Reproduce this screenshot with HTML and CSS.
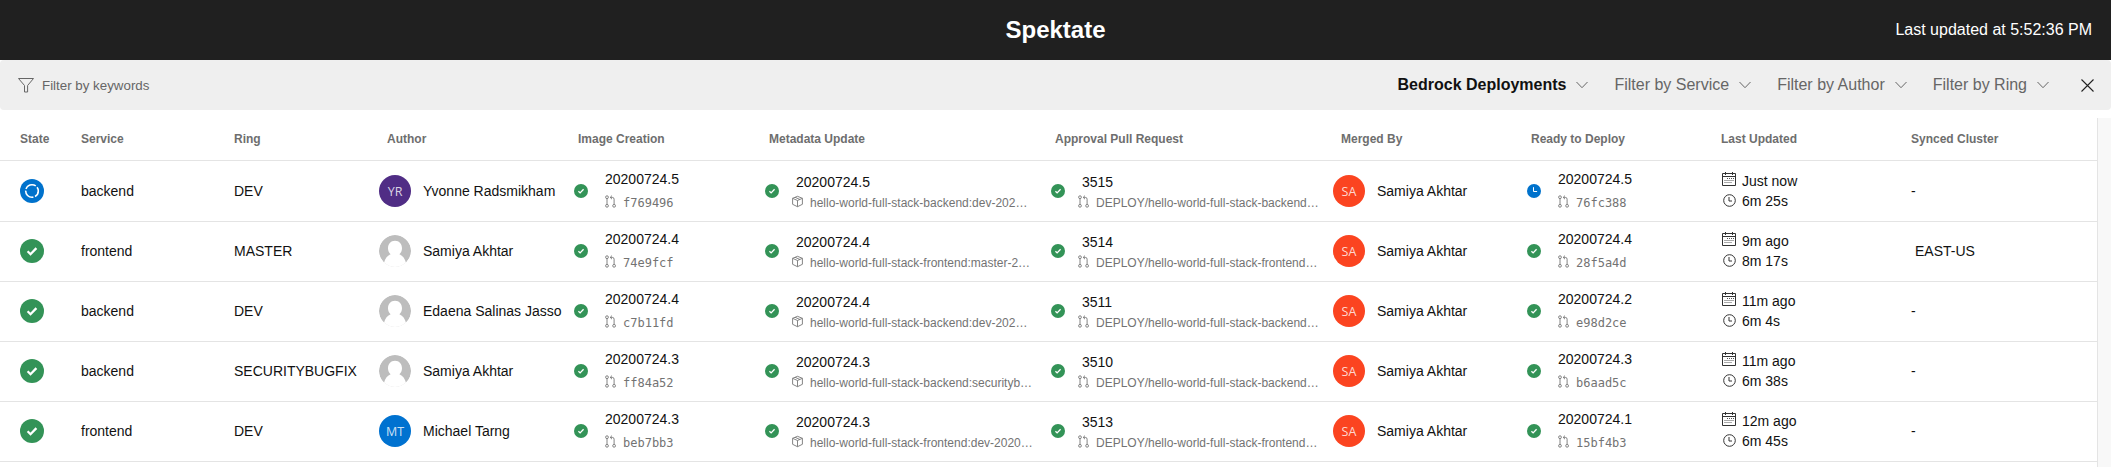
FILE: index.html
```
<!DOCTYPE html>
<html lang="en">
<head>
<meta charset="utf-8">
<title>Spektate</title>
<link rel="stylesheet" href="styles.css">
</head>
<body>
<svg width="0" height="0" class="defs" aria-hidden="true">
  <symbol id="ok" viewBox="0 0 24 24"><circle cx="12" cy="12" r="12" fill="#339357"/><path d="M7.6 12.3l2.900 2.900 5.900-6.100" fill="none" stroke="#fff" stroke-width="2.300"/></symbol>
  <symbol id="run" viewBox="0 0 24 24"><circle cx="12" cy="12" r="12" fill="#0072cc"/><circle cx="12" cy="12" r="6.300" fill="none" stroke="#fff" stroke-width="1.600" stroke-dasharray="11.500 1.700" stroke-dashoffset="5"/></symbol>
  <symbol id="wait" viewBox="0 0 14 14"><circle cx="7" cy="7" r="7" fill="#0072cc"/><path d="M6.500 3.200v4.300h3.600" fill="none" stroke="#fff"/></symbol>
  <symbol id="pr" viewBox="0.5 0 11 13"><g fill="none" stroke="#777" stroke-width=".9"><circle cx="2.500" cy="2.200" r="1.400"/><circle cx="2.500" cy="10.800" r="1.400"/><circle cx="9.600" cy="10.800" r="1.400"/><path d="M2.500 3.600v5.800M9.600 9.400V4.200q0-1.800-1.800-1.800H5.800M7.500.6L5.700 2.400l1.800 1.800"/></g></symbol>
  <symbol id="box" viewBox="0.5 0 11 12"><path d="M6 .8l4.900 2v6L6 11.2 1.100 8.800v-6zM1.100 2.800L6 5l4.900-2.200M6 5v6.200M3.500 1.800l5 2.200" fill="none" stroke="#777" stroke-width=".9"/></symbol>
  <symbol id="cal" viewBox="0 0 14 14"><path d="M.5 1.500h13v12H.5zM.5 4.500h13M3.500 0v3M10.500 0v3" fill="none" stroke="#333"/><path d="M5 6.500h7M2.500 8.500H12M2.500 10.500h7" fill="none" stroke="#555" stroke-dasharray="1 1"/></symbol>
  <symbol id="clock" viewBox="0 0 13 13"><circle cx="6.500" cy="6.500" r="5.800" fill="none" stroke="#333"/><path d="M6 3v4h3" fill="none" stroke="#333"/></symbol>
  <symbol id="person" viewBox="0 0 32 32"><circle cx="16" cy="16" r="16" fill="#bdbdbd"/><path d="M16 5.700c-4.300 0-7 3.300-7 7.600 0 2.500 1 4.700 2.600 6-3.600 1.500-5.500 4.500-6.600 8.400V32h22v-4.300c-1.100-3.900-3-6.900-6.600-8.400 1.600-1.300 2.600-3.500 2.600-6 0-4.300-2.700-7.600-7-7.600z" fill="#fff"/></symbol>
  <symbol id="chev" viewBox="0 0 12 8"><path d="M.5 1l5.500 5.700L11.500 1" fill="none" stroke="#666"/></symbol>
</svg>
<header class="topbar"><h1 class="title">Spektate</h1><span class="updated">Last updated at 5:52:36 PM</span></header>
<div class="filters">
  <svg class="funnel" viewBox="0 0 16 15"><path d="M.5.500h15l-5.900 7v6.500H6.500V7.500z" fill="none" stroke="#666"/></svg>
  <span class="keywords">Filter by keywords</span>
  <div class="drop active">Bedrock Deployments<svg class="chev"><use href="#chev"/></svg></div>
  <div class="drop">Filter by Service<svg class="chev"><use href="#chev"/></svg></div>
  <div class="drop">Filter by Author<svg class="chev"><use href="#chev"/></svg></div>
  <div class="drop">Filter by Ring<svg class="chev"><use href="#chev"/></svg></div>
  <svg class="close" viewBox="0 0 13 13"><path d="M.5.500l12 12M12.500.500l-12 12" fill="none" stroke="#222" stroke-width="1.100"/></svg>
</div>
<main class="content">
  <div class="table" id="table">
    <div class="row head"><span>State</span><span>Service</span><span>Ring</span><span>Author</span><span>Image Creation</span><span>Metadata Update</span><span>Approval Pull Request</span><span>Merged By</span><span>Ready to Deploy</span><span>Last Updated</span><span>Synced Cluster</span></div>
  </div>
  <div class="gutter"></div>
</main>
<script src="app.js"></script>
</body>
</html>
```
FILE: styles.css
```
* { box-sizing: border-box; }
body { margin: 0; height: 467px; overflow: hidden; background: #fff; color: #111; font: 14px/20px "Liberation Sans", Arial, sans-serif; display: flex; flex-direction: column; }
.defs { position: absolute; }
svg { display: block; flex: none; }
.topbar { height: 60px; flex: none; background: #202020; color: #fff; display: grid; grid-template-columns: 1fr auto 1fr; align-items: center; padding: 0 19px; }
.title { grid-column: 2; margin: 0; font-size: 24px; line-height: 28px; }
.updated { justify-self: end; font-size: 16px; }
.filters { height: 50px; flex: none; background: #efefef; border-radius: 4px; display: flex; align-items: center; padding: 0 17px 0 18px; color: #666; }
.funnel { width: 16px; height: 15px; }
.keywords { margin: 1px auto 0 8px; font-size: 13.333px; }
.drop { display: flex; align-items: center; font-size: 16px; margin-right: 26px; }
.active { color: #111; font-weight: bold; }
.chev { width: 12px; height: 8px; margin-left: 10px; }
.close { width: 13px; height: 13px; margin-left: 6px; }
.content { flex: 1; display: flex; min-height: 0; }
.table { width: 2097px; }
.gutter { flex: 1; margin-top: 8px; border-left: 1px solid #e4e4e4; background: #f8f8f8; }
.row { height: 60px; display: grid; align-items: center; border-bottom: 1px solid #e4e4e4; padding: 0 0 1px 20px; grid-template-columns: 61px 153px 145px 195px 191px 286px 282px 194px 194px 190px 1fr; }
.head { height: 51px; color: #6e6e6e; font-size: 12px; font-weight: bold; padding: 7px 0 0 20px; }
.head > :nth-child(n+4) { padding-left: 8px; }
.head > :nth-child(5), .head > :nth-child(6), .head > :nth-child(7), .head > :nth-child(9) { padding-left: 4px; }
.head > :nth-child(n+10) { padding-left: 0; }
.head + .row { height: 61px; padding-bottom: 0; }
.state { width: 24px; height: 24px; }
.person { display: flex; align-items: center; gap: 12px; white-space: nowrap; }
.avatar { width: 32px; height: 32px; border-radius: 50%; display: flex; align-items: center; justify-content: center; color: #fffc; font: 12.5px "Open Sans", sans-serif; flex: none; }
.yr { background: #502d85; }
.mt { background: #0072d0; }
.sa { background: #fb4420; }
.step { display: flex; align-items: center; min-width: 0; }
.dot { width: 14px; height: 14px; margin-right: 17px; }
.wide .dot { margin-right: 13px; }
.build { line-height: 20px; margin-bottom: 5px; }
.wide .build { margin: 4px 0 1px 4px; }
.sub { display: flex; align-items: center; font-size: 12px; line-height: 18px; margin-bottom: 1px; color: #737373; white-space: nowrap; }
.wide .sub { line-height: 20px; margin-bottom: 2px; }
.glyph { width: 11px; height: 13px; margin: 0 7px 3px 0; }
.hash { font-family: "DejaVu Sans Mono", monospace; }
.times { padding-left: 1px; }
.time { display: flex; align-items: center; line-height: 20px; gap: 6px; }
.time svg { width: 14px; height: 14px; margin-bottom: 5px; }
.time + .time { padding-left: 1px; }
.time + .time svg { width: 13px; height: 13px; margin-bottom: 2px; }
.cluster { padding-left: 4px; }
```
FILE: app.js
```
const rows = [
  ["run", "backend", "DEV", "yr", "Yvonne Radsmikham", "20200724.5", "f769496", "hello-world-full-stack-backend:dev-202…", "3515", "backend", "wait", "20200724.5", "76fc388", "Just now", "6m 25s", "-"],
  ["ok", "frontend", "MASTER", "", "Samiya Akhtar", "20200724.4", "74e9fcf", "hello-world-full-stack-frontend:master-2…", "3514", "frontend", "ok", "20200724.4", "28f5a4d", "9m ago", "8m 17s", "EAST-US"],
  ["ok", "backend", "DEV", "", "Edaena Salinas Jasso", "20200724.4", "c7b11fd", "hello-world-full-stack-backend:dev-202…", "3511", "backend", "ok", "20200724.2", "e98d2ce", "11m ago", "6m 4s", "-"],
  ["ok", "backend", "SECURITYBUGFIX", "", "Samiya Akhtar", "20200724.3", "ff84a52", "hello-world-full-stack-backend:securityb…", "3510", "backend", "ok", "20200724.3", "b6aad5c", "11m ago", "6m 38s", "-"],
  ["ok", "frontend", "DEV", "mt", "Michael Tarng", "20200724.3", "beb7bb3", "hello-world-full-stack-frontend:dev-2020…", "3513", "frontend", "ok", "20200724.1", "15bf4b3", "12m ago", "6m 45s", "-"]
];
const icon = (id, cls) => `<svg class="${cls}"><use href="#${id}"/></svg>`;
const person = (key, name) => `<div class="person">${key ? `<span class="avatar ${key}">${key.toUpperCase()}</span>` : icon("person", "avatar")}<span>${name}</span></div>`;
const step = (state, build, glyph, sub, wide) => `<div class="step ${wide ? "wide" : ""}">${icon(state, "dot")}<div><div class="build">${build}</div><div class="sub">${icon(glyph, "glyph")}<span class="${wide ? "" : "hash"}">${sub}</span></div></div></div>`;
document.getElementById("table").insertAdjacentHTML("beforeend", rows.map(r => `<div class="row">
${icon(r[0], "state")}<span>${r[1]}</span><span>${r[2]}</span>${person(r[3], r[4])}
${step("ok", r[5], "pr", r[6])}${step("ok", r[5], "box", r[7], true)}
${step("ok", r[8], "pr", `DEPLOY/hello-world-full-stack-${r[9]}…`, true)}${person("sa", "Samiya Akhtar")}
${step(r[10], r[11], "pr", r[12])}
<div class="times"><div class="time">${icon("cal", "")}${r[13]}</div><div class="time">${icon("clock", "")}${r[14]}</div></div>
<span class="${r[15] === "-" ? "" : "cluster"}">${r[15]}</span></div>`).join(""));
```
